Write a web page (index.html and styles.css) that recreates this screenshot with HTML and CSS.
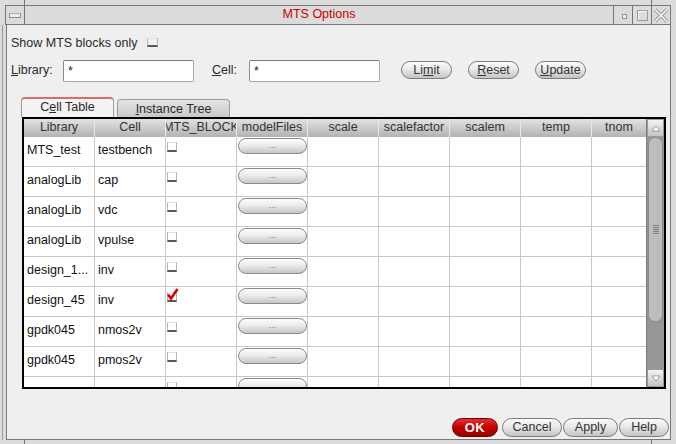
FILE: index.html
```html
<!DOCTYPE html>
<html>
<head>
<meta charset="utf-8">
<link rel="stylesheet" href="styles.css">
</head>
<body>
<div class="titlebar">
  <div class="tb-cell tb-menu"><span class="menu-btn"></span></div>
  <div class="tb-title">MTS Options</div>
  <div class="tb-cell tb-min"><span class="min-btn"></span></div>
  <div class="tb-cell tb-max"><span class="max-btn"></span></div>
  <div class="tb-cell tb-close">
    <svg width="16" height="15" viewBox="0 0 16 15"><path d="M2 1.5 L14 13.5 M14 1.5 L2 13.5" stroke="#9c9c9c" stroke-width="3.6" fill="none"/><path d="M2 1.5 L14 13.5 M14 1.5 L2 13.5" stroke="#f6f6f6" stroke-width="1.6" fill="none"/></svg>
  </div>
</div>
<div class="window">
  <div class="row-show">Show MTS blocks only<span class="chk chk-top"></span></div>
  <div class="row-filter">
    <span class="lbl lbl1"><u>L</u>ibrary:</span>
    <div class="input">*</div>
    <span class="lbl lbl2"><u>C</u>ell:</span>
    <div class="input">*</div>
    <button class="pill top-btn first">Li<u>m</u>it</button>
    <button class="pill top-btn"><u>R</u>eset</button>
    <button class="pill top-btn"><u>U</u>pdate</button>
  </div>
  <div class="tabs">
    <div class="tab tab-active">C<u>e</u>ll Table</div>
    <div class="tab tab-idle"><u>I</u>nstance Tree</div>
  </div>
  <div class="table">
    <div class="grid">
      <div class="hdr">
        <div>Library</div><div>Cell</div><div><span>MTS_BLOCK</span></div><div>modelFiles</div><div>scale</div><div>scalefactor</div><div>scalem</div><div>temp</div><div>tnom</div>
      </div>
      <div class="row"><div class="txt">MTS_test</div><div class="txt">testbench</div><div class="cb"><span class="chk"></span></div><div class="bc"><span class="dots">...</span></div><div></div><div></div><div></div><div></div><div></div></div>
      <div class="row"><div class="txt">analogLib</div><div class="txt">cap</div><div class="cb"><span class="chk"></span></div><div class="bc"><span class="dots">...</span></div><div></div><div></div><div></div><div></div><div></div></div>
      <div class="row"><div class="txt">analogLib</div><div class="txt">vdc</div><div class="cb"><span class="chk"></span></div><div class="bc"><span class="dots">...</span></div><div></div><div></div><div></div><div></div><div></div></div>
      <div class="row"><div class="txt">analogLib</div><div class="txt">vpulse</div><div class="cb"><span class="chk"></span></div><div class="bc"><span class="dots">...</span></div><div></div><div></div><div></div><div></div><div></div></div>
      <div class="row"><div class="txt">design_1...</div><div class="txt">inv</div><div class="cb"><span class="chk"></span></div><div class="bc"><span class="dots">...</span></div><div></div><div></div><div></div><div></div><div></div></div>
      <div class="row"><div class="txt">design_45</div><div class="txt">inv</div><div class="cb"><span class="chk checked"><svg class="tick" width="12" height="14" viewBox="0 0 12 14"><path d="M1 6.5 L4 10.5 L10.5 1" stroke="#d40000" stroke-width="2.6" fill="none"/></svg></span></div><div class="bc"><span class="dots">...</span></div><div></div><div></div><div></div><div></div><div></div></div>
      <div class="row"><div class="txt">gpdk045</div><div class="txt">nmos2v</div><div class="cb"><span class="chk"></span></div><div class="bc"><span class="dots">...</span></div><div></div><div></div><div></div><div></div><div></div></div>
      <div class="row"><div class="txt">gpdk045</div><div class="txt">pmos2v</div><div class="cb"><span class="chk"></span></div><div class="bc"><span class="dots">...</span></div><div></div><div></div><div></div><div></div><div></div></div>
      <div class="row"><div class="txt"></div><div class="txt"></div><div class="cb"><span class="chk"></span></div><div class="bc"><span class="dots"></span></div><div></div><div></div><div></div><div></div><div></div></div>
    </div>
    <div class="scroll">
      <div class="sb-btn"><svg width="10" height="7" viewBox="0 0 10 7"><path d="M1 6 L5 1 L9 6 Z" fill="#fff" stroke="#8a8a8a" stroke-width="0.8"/></svg></div>
      <div class="thumb"><span class="grip"></span></div>
      <div class="track"></div>
      <div class="sb-btn"><svg width="10" height="7" viewBox="0 0 10 7"><path d="M1 1 L5 6 L9 1 Z" fill="#fff" stroke="#8a8a8a" stroke-width="0.8"/></svg></div>
    </div>
  </div>
  <div class="footer">
    <button class="pill ok">OK</button>
    <button class="pill cancel">Cancel</button>
    <button class="pill apply">Apply</button>
    <button class="pill help">Help</button>
  </div>
</div>
</body>
</html>
```
FILE: styles.css
```css
* { box-sizing: border-box; }
html, body { margin: 0; padding: 0; }
body {
  width: 676px;
  height: 444px;
  overflow: hidden;
  background: #dcdcdc;
  font-family: "Liberation Sans", Arial, sans-serif;
  font-size: 12.5px;
  color: #222;
}
u { text-decoration: underline; text-underline-offset: 1px; }

/* window manager title bar */
.titlebar {
  position: relative;
  display: flex;
  margin: 5px 0 0 5px;
  width: 666px;
  height: 20px;
  border: 1px solid #777;
  background: #dcdcdc;
}
.titlebar::before, .titlebar::after {
  content: "";
  position: absolute;
  top: -6px;
  width: 1px;
  height: 5px;
  background: #777;
}
.titlebar::before { left: 18px; }
.titlebar::after { left: 645px; }
.tb-cell {
  flex: none;
  width: 19px;
  display: flex;
  align-items: center;
  justify-content: center;
}
.tb-menu { border-right: 1px solid #777; }
.tb-min, .tb-max, .tb-close { border-left: 1px solid #777; }
.tb-title {
  flex: 1;
  text-align: center;
  color: #c80000;
  line-height: 17px;
}
.menu-btn {
  width: 12px;
  height: 5px;
  margin-top: 1px;
  background: #ececec;
  border: 1px solid #8a8a8a;
  border-top-color: #b0b0b0;
}
.min-btn {
  width: 5px;
  height: 5px;
  margin: 3px 0 0 2px;
  background: #f4f4f4;
  border: 1px solid #909090;
}
.max-btn {
  width: 11px;
  height: 11px;
  border: 1px solid #9a9a9a;
  box-shadow: inset 1px 1px 0 #fafafa;
}
.tb-close svg { display: block; }

/* dialog body */
.window {
  position: relative;
  margin-left: 6px;
  width: 665px;
  height: 415px;
  border: 1px solid #777;
  border-top: none;
  background: #efefef;
  display: flex;
  flex-direction: column;
  box-shadow: -3px 0 0 #dcdcdc, -4px 0 0 #9a9a9a;
}
.window::before, .window::after {
  content: "";
  position: absolute;
  bottom: -5px;
  width: 1px;
  height: 4px;
  background: #777;
}
.window::before { left: 17px; }
.window::after { left: 644px; }

.row-show {
  display: flex;
  align-items: flex-start;
  margin-top: 11px;
  padding-left: 4px;
  height: 15px;
  line-height: 15px;
  color: #2a2a2a;
}
.chk {
  position: relative;
  display: block;
  width: 10px;
  height: 10px;
  background: #fff;
  border: 1px solid #b4b4b4;
  border-top-color: #e2e2e2;
  border-bottom: 2px solid #5a5a5a;
}
.chk-top {
  width: 11px;
  height: 9px;
  margin: 2px 0 0 10px;
  background: #f2f2f2;
}
.tick {
  position: absolute;
  left: -1px;
  top: -5px;
}

.row-filter {
  display: flex;
  align-items: flex-start;
  margin-top: 9px;
  padding-left: 4px;
  height: 22px;
}
.lbl { line-height: 15px; padding-top: 3px; color: #2a2a2a; }
.lbl1 { width: 52px; }
.lbl2 { width: 37px; margin-left: 18px; }
.input {
  width: 131px;
  height: 22px;
  background: #fff;
  border: 1px solid #a8a8a8;
  border-top-color: #7c7c7c;
  border-left-color: #8c8c8c;
  border-radius: 2px;
  padding-left: 4px;
  line-height: 20px;
  color: #222;
}
.pill {
  font-family: "Liberation Sans", Arial, sans-serif;
  font-size: 12.5px;
  color: #333;
  padding: 0;
  border: 1px solid #7c7c7c;
  background: linear-gradient(#fbfbfb, #e9e9e9 45%, #c4c4c4);
  text-align: center;
}
.top-btn {
  width: 51px;
  height: 18px;
  margin-top: 1px;
  margin-left: 16px;
  border-radius: 9px;
  line-height: 16px;
}
.top-btn.first { margin-left: 21px; }

/* tabs */
.tabs {
  display: flex;
  align-items: flex-end;
  margin-top: 15px;
  margin-left: 14px;
  height: 20px;
}
.tab {
  text-align: center;
  border: 1px solid #9c9c9c;
  border-bottom: none;
  border-radius: 4px 4px 0 0;
  line-height: 15px;
  color: #2a2a2a;
}
.tab-active {
  width: 93px;
  height: 20px;
  padding-top: 1px;
  border-top: 2px solid #e06a6a;
  background: #f3f3f3;
}
.tab-idle {
  width: 113px;
  height: 18px;
  margin-left: 3px;
  padding-top: 2px;
  background: linear-gradient(#e4e4e4, #c9c9c9);
}

/* table */
.table {
  display: flex;
  margin: 0 4px 0 15px;
  height: 272px;
  border: 2px solid #000;
  background: #fff;
}
.grid {
  flex: 1;
  overflow: hidden;
}
.hdr, .row {
  display: grid;
  grid-template-columns: repeat(8, 71px) 54px;
}
.hdr {
  height: 18px;
  background: linear-gradient(#e2e2e2, #c6c6c6 60%, #b2b2b2);
}
.hdr > div {
  display: flex;
  justify-content: center;
  overflow: hidden;
  white-space: nowrap;
  line-height: 16px;
  color: #333;
  border-right: 1px solid #e8e8e8;
}
.hdr > div:last-child { border-right: none; }
.row {
  height: 30px;
  border-bottom: 1px solid #c8c8c8;
}
.row > div { border-right: 1px solid #c8c8c8; }
.row > div:last-child { border-right: none; }
.txt {
  padding-left: 3px;
  line-height: 26px;
  white-space: nowrap;
  overflow: hidden;
  color: #111;
}
.cb { padding: 5px 0 0 1px; }
.bc { padding: 1px 0 0 1px; }
.dots {
  display: block;
  width: 69px;
  height: 16px;
  border: 1px solid #8a8a8a;
  border-radius: 8px;
  background: linear-gradient(#fdfdfd, #ececec 45%, #c6c6c6);
  font-size: 9px;
  line-height: 12px;
  text-align: center;
  color: #777;
}

/* scrollbar */
.scroll {
  width: 18px;
  display: flex;
  flex-direction: column;
  background: #979797;
  border-left: 1px solid #7a7a7a;
}
.sb-btn {
  height: 18px;
  flex: none;
  display: flex;
  align-items: center;
  justify-content: center;
  background: linear-gradient(#f2f2f2, #c4c4c4);
  border: 1px solid #9a9a9a;
}
.thumb {
  flex: none;
  height: 185px;
  margin: 0 0 0 1px;
  width: 15px;
  background: #bdbdbd;
  border: 1px solid #8a8a8a;
  border-radius: 7px;
  display: flex;
  align-items: center;
  justify-content: center;
}
.grip {
  width: 6px;
  height: 9px;
  background: repeating-linear-gradient(#7c7c7c 0 1px, transparent 1px 2px);
}
.track { flex: 1; }

/* footer */
.footer {
  margin-top: auto;
  margin-bottom: 2px;
  padding-right: 1px;
  display: flex;
  justify-content: flex-end;
  height: 19px;
}
.footer .pill {
  height: 19px;
  border-radius: 9.5px;
  line-height: 17px;
}
.ok {
  width: 46px;
  margin-right: 4px;
  background: linear-gradient(#e43030, #c40000 50%, #980000) !important;
  border-color: #6a0000 !important;
  color: #fff !important;
  font-weight: bold;
  font-size: 13px !important;
  letter-spacing: 0.5px;
}
.cancel { width: 60px; margin-right: 1px; }
.apply { width: 55px; margin-right: 1px; }
.help { width: 50px; }
```
